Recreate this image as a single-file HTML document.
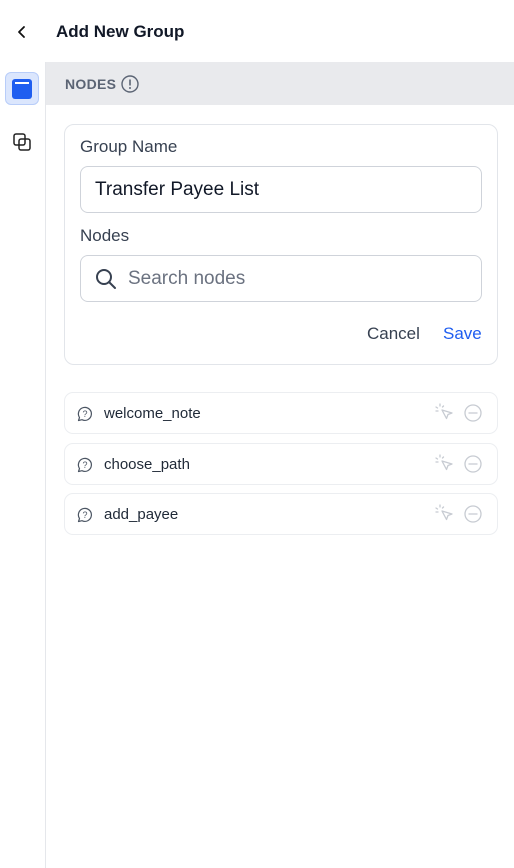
<!DOCTYPE html>
<html><head><style>
*{box-sizing:border-box;margin:0;padding:0}
body{width:514px;height:868px;background:#fff;font-family:"Liberation Sans",sans-serif;position:relative;overflow:hidden;color:#1f2937}
.abs{position:absolute}
.title{left:56px;top:22px;font-size:17px;font-weight:bold;color:#111827}
.side{left:45px;top:62px;width:1px;height:806px;background:#e5e7eb}
.bar{left:46px;top:62px;width:468px;height:43px;background:#e9eaed}
.nodes{left:65px;top:76px;font-size:14px;font-weight:bold;color:#5b6474;letter-spacing:.3px}
.card{left:64px;top:124px;width:434px;height:241px;border:1px solid #e2e5ea;border-radius:10px}
.lbl{font-size:17px;color:#374151}
.inp{left:80px;width:402px;height:47px;border:1px solid #cfd3da;border-radius:8px;font-size:19px;padding-left:14px;line-height:45px}
.row{left:64px;width:434px;height:42px;border:1px solid #eceef1;border-radius:9px;font-size:15px;color:#1f2937}
.row span{position:absolute;left:39px;top:12px}
</style></head><body>
<svg class="abs" style="left:15px;top:25px" width="14" height="14" viewBox="0 0 14 14"><path d="M9 2L4 7l5 5" fill="none" stroke="#111" stroke-width="1.8" stroke-linecap="round" stroke-linejoin="round"/></svg>
<div class="abs title">Add New Group</div>
<div class="abs side"></div>
<div class="abs" style="left:5px;top:72px;width:34px;height:33px;background:#dbe6fd;border:1px solid #b8cdf9;border-radius:6px"></div>
<div class="abs" style="left:12px;top:79px;width:20px;height:20px;background:#1f5ef0;border-radius:3px"></div>
<div class="abs" style="left:15px;top:82px;width:14px;height:2px;background:#fff"></div>
<svg class="abs" style="left:12px;top:132px" width="20" height="20" viewBox="0 0 20 20" fill="none" stroke="#222" stroke-width="1.5"><rect x="2" y="2" width="11" height="11" rx="2"/><rect x="7" y="7" width="11" height="11" rx="2"/></svg>
<div class="abs bar"></div>
<div class="abs nodes">NODES</div>
<svg class="abs" style="left:121px;top:75px" width="18" height="18" viewBox="0 0 18 18"><circle cx="9" cy="9" r="8" fill="none" stroke="#5b6474" stroke-width="1.4"/><path d="M9 4.5v6" stroke="#5b6474" stroke-width="1.6"/><circle cx="9" cy="13" r="1" fill="#5b6474"/></svg>
<div class="abs card"></div>
<div class="abs lbl" style="left:80px;top:137px">Group Name</div>
<div class="abs inp" style="top:166px;color:#111827">Transfer Payee List</div>
<div class="abs lbl" style="left:80px;top:226px">Nodes</div>
<div class="abs inp" style="top:255px;color:#6b7280;padding-left:47px">Search nodes</div>
<svg class="abs" style="left:94px;top:267px" width="24" height="24" viewBox="0 0 24 24" fill="none" stroke="#374151" stroke-width="2"><circle cx="10" cy="10" r="7"/><path d="M15 15l6 6" stroke-linecap="round"/></svg>
<div class="abs" style="left:367px;top:324px;font-size:17px;color:#374151">Cancel</div>
<div class="abs" style="left:443px;top:324px;font-size:17px;color:#1f5ef0">Save</div>
<div class="abs row" style="top:392px"><span>welcome_note</span></div>
<div class="abs row" style="top:443px"><span>choose_path</span></div>
<div class="abs row" style="top:493px"><span>add_payee</span></div>
<svg class="abs" style="left:0;top:0" width="514" height="868">
<g fill="none" stroke="#4b5563" stroke-width="1.2" stroke-linejoin="round">
<path d="M78.5 420.5l1-3a6.5 6.5 0 1 1 2.5 2.2z"/>
<path d="M78.5 471.5l1-3a6.5 6.5 0 1 1 2.5 2.2z"/>
<path d="M78.5 521.5l1-3a6.5 6.5 0 1 1 2.5 2.2z"/>
</g>
<g font-family="Liberation Sans" font-size="9" fill="#4b5563" text-anchor="middle">
<text x="85" y="417">?</text><text x="85" y="468">?</text><text x="85" y="518">?</text>
</g>
<g fill="none" stroke="#c7cbd2" stroke-width="1.3" stroke-linecap="round">
<path d="M442 410l10 3-4 1.5-1.5 4z" stroke-linejoin="round"/><path d="M440 404v2M436 407l1.5 1M443.5 406l-1 1M436 411h2"/>
<circle cx="473" cy="413" r="8"/><path d="M469 413h8"/>
<g transform="translate(0 51)"><path d="M442 410l10 3-4 1.5-1.5 4z" stroke-linejoin="round"/><path d="M440 404v2M436 407l1.5 1M443.5 406l-1 1M436 411h2"/>
<circle cx="473" cy="413" r="8"/><path d="M469 413h8"/></g>
<g transform="translate(0 101)"><path d="M442 410l10 3-4 1.5-1.5 4z" stroke-linejoin="round"/><path d="M440 404v2M436 407l1.5 1M443.5 406l-1 1M436 411h2"/>
<circle cx="473" cy="413" r="8"/><path d="M469 413h8"/></g>
</g>
</svg>
</body></html>
